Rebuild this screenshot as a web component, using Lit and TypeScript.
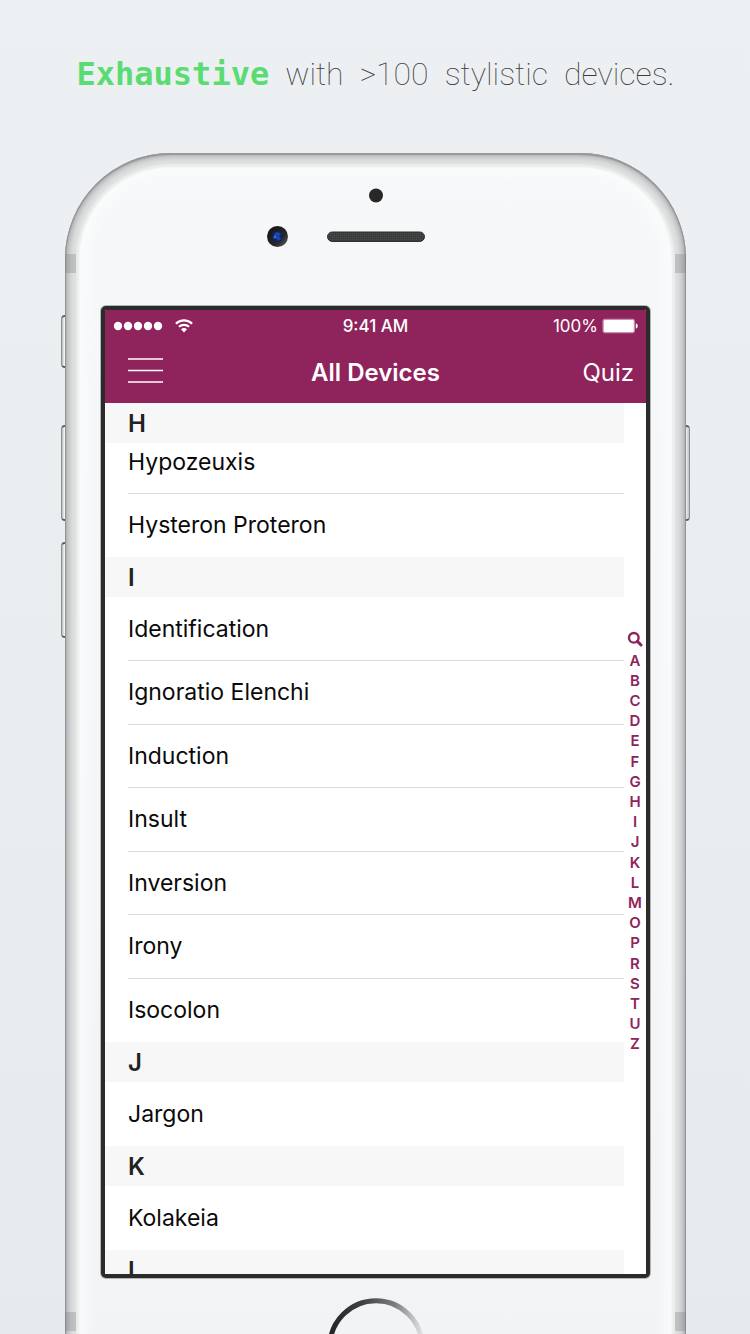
import { LitElement, html, css, svg } from "lit";
import { customElement, property } from "lit/decorators.js";

interface Section {
  letter: string;
  devices: string[];
}

const SECTIONS: Section[] = [
  { letter: "H", devices: ["Hypozeuxis", "Hysteron Proteron"] },
  {
    letter: "I",
    devices: [
      "Identification",
      "Ignoratio Elenchi",
      "Induction",
      "Insult",
      "Inversion",
      "Irony",
      "Isocolon",
    ],
  },
  { letter: "J", devices: ["Jargon"] },
  { letter: "K", devices: ["Kolakeia"] },
  { letter: "L", devices: [] },
];

const INDEX = [..."ABCDEFGHIJKLMOPRSTUZ"];

@customElement("status-bar")
export class StatusBar extends LitElement {
  static styles = css`
    :host {
      display: grid;
      grid-template-columns: 1fr auto 1fr;
      align-items: center;
      height: 32px;
      padding: 0 8px;
      color: #fff;
      font-size: 17px;
      line-height: 20px;
    }
    .signal {
      display: flex;
      align-items: center;
      gap: 12px;
    }
    .time {
      font-weight: 500;
    }
    .power {
      display: flex;
      align-items: center;
      justify-content: flex-end;
      gap: 4px;
    }
    svg {
      display: block;
    }
  `;

  render() {
    return html`
      <div class="signal">
        <svg width="50" height="10" viewBox="0 0 50 10" fill="#fff" aria-hidden="true">
          ${[5, 15, 25, 35, 45].map((x) => svg`<circle cx=${x} cy="5" r="4.2" />`)}
        </svg>
        <svg width="18" height="14" viewBox="0 0 18 14" fill="none" stroke="#fff" stroke-width="2.2" aria-hidden="true">
          <path d="M0.9 4.7C5.4 .3 12.6 .3 17.1 4.7" />
          <path d="M3.9 7.8C6.8 5.1 11.2 5.1 14.1 7.8" />
          <path d="M6 10.3C7.8 8.7 10.2 8.7 12 10.3L9 13.4Z" fill="#fff" stroke="none" />
        </svg>
      </div>
      <span class="time">9:41 AM</span>
      <div class="power">
        <span>100%</span>
        <svg width="36" height="16" viewBox="0 0 36 16" aria-hidden="true">
          <rect x="0.5" y="0.8" width="32.5" height="14.4" rx="2.4" fill="#c78fac" />
          <rect x="1.8" y="2" width="30" height="12" rx="1.2" fill="#fff" />
          <path d="M33.8 5.2q2 .6 2 2.8t-2 2.8z" fill="#fff" />
        </svg>
      </div>
    `;
  }
}

@customElement("nav-bar")
export class NavBar extends LitElement {
  @property() heading = "";

  static styles = css`
    :host {
      display: grid;
      grid-template-columns: 1fr auto 1fr;
      align-items: center;
      height: 61px;
      padding: 0 12px;
      color: #fff;
    }
    button {
      padding: 0;
      border: 0;
      background: none;
      color: inherit;
      font: inherit;
      font-size: 24px;
      line-height: 30px;
      cursor: pointer;
    }
    .menu {
      justify-self: start;
      padding-left: 11px;
    }
    .quiz {
      justify-self: end;
    }
    h2 {
      margin: 0;
      font-size: 24px;
      line-height: 30px;
      font-weight: 600;
    }
    svg {
      display: block;
    }
  `;

  render() {
    return html`
      <button class="menu" aria-label="Menu">
        <svg width="35" height="30" viewBox="0 0 35 30" stroke="#fff" stroke-width="1.5">
          <path d="M0 1H35M0 12.5H35M0 24H35" />
        </svg>
      </button>
      <h2>${this.heading}</h2>
      <button class="quiz">Quiz</button>
    `;
  }
}

@customElement("device-list")
export class DeviceList extends LitElement {
  @property({ attribute: false }) sections: Section[] = [];

  static styles = css`
    :host {
      display: block;
      overflow: hidden;
    }
    h3 {
      position: relative;
      height: 40px;
      margin: 0;
      padding-left: 23px;
      background: #f7f7f7;
      color: #222;
      font-size: 24px;
      line-height: 42px;
      font-weight: 600;
    }
    ul {
      margin: 0;
      padding: 0 0 0 23px;
      list-style: none;
    }
    .scrolled {
      margin-top: -13px;
    }
    li {
      height: 63px;
      line-height: 64px;
    }
    li:nth-child(even),
    li:last-child {
      height: 64px;
    }
    li:not(:last-child) {
      box-shadow: 0 1px #dcdcdc;
    }
    a {
      display: block;
      color: #0a0a0a;
      font-size: 23px;
      text-decoration: none;
    }
  `;

  render() {
    return this.sections.map(
      (s, i) => html`
        <section>
          <h3 id=${s.letter}>${s.letter}</h3>
          <ul class=${i === 0 ? "scrolled" : ""}>
            ${s.devices.map((d) => html`<li><a href="#">${d}</a></li>`)}
          </ul>
        </section>
      `
    );
  }
}

@customElement("index-rail")
export class IndexRail extends LitElement {
  static styles = css`
    :host {
      display: flex;
      flex-direction: column;
      align-items: center;
      justify-content: center;
      padding-top: 4px;
      background: #fff;
    }
    .search {
      display: grid;
      place-items: center;
      width: 22px;
      height: 24px;
      padding: 0;
      border: 0;
      background: none;
    }
    nav {
      display: grid;
      grid-auto-rows: 1fr;
      height: 404px;
      text-align: center;
    }
    a {
      color: #8f245c;
      font-size: 15px;
      line-height: 20px;
      font-weight: 600;
      text-decoration: none;
    }
  `;

  render() {
    return html`
      <button class="search" aria-label="Search">
        <svg width="16" height="16" viewBox="0 0 16 16" fill="none" stroke="#8f245c">
          <circle cx="6.8" cy="6.8" r="4.8" stroke-width="2.4" />
          <path d="M10.4 10.4L14 14" stroke-width="3" stroke-linecap="round" />
        </svg>
      </button>
      <nav aria-label="Index">
        ${INDEX.map((l) => html`<a href="#${l}">${l}</a>`)}
      </nav>
    `;
  }
}

@customElement("phone-frame")
export class PhoneFrame extends LitElement {
  static styles = css`
    :host {
      position: relative;
      display: flex;
      flex-direction: column;
      min-height: 0;
    }
    .body {
      position: relative;
      flex: 1;
      min-height: 0;
      display: flex;
      flex-direction: column;
      box-sizing: border-box;
      margin-bottom: -60px;
      padding: 0 36px;
      border-radius: 106px 106px 0 0;
      background: linear-gradient(#f7f8fa, #f2f3f5);
      box-shadow:
        inset 0 2px 1px #97989a,
        inset 1px 0 1px #8e8f91,
        inset -1px 0 1px #8e8f91,
        inset 0 0 7px 3px #a4a5a7,
        inset 0 0 1px 11px #e0e2e2,
        inset 0 0 2px 14px #eaeceb,
        inset 0 0 14px 20px #fbfcfc;
    }
    .top {
      flex: none;
      height: 153px;
    }
    .top svg,
    .chin svg {
      display: block;
      margin: 0 auto;
    }
    .screen {
      flex: 1;
      min-height: 0;
      display: flex;
      flex-direction: column;
      border: 4px solid #2b2b2b;
      border-radius: 5px;
      box-shadow: 0 0 0 1px #b4b5b7;
      overflow: hidden;
      background: #fff;
    }
    .chin {
      flex: none;
      height: 116px;
      padding-top: 20px;
      box-sizing: border-box;
      overflow: hidden;
    }
    .key {
      position: absolute;
      left: -4px;
      box-sizing: border-box;
      width: 8px;
      height: 96px;
      border: 1px solid #8d8f90;
      border-top: 2px solid #5b5d5e;
      border-bottom: 2px solid #5b5d5e;
      border-radius: 4px 0 0 4px;
      background: linear-gradient(90deg, #b7babb, #f4f6f6 40%, #c2c4c5);
    }
    .mute {
      top: 162px;
      height: 53px;
    }
    .up {
      top: 272px;
    }
    .down {
      top: 389px;
    }
    .power {
      top: 272px;
      left: auto;
      right: -4px;
      border-radius: 0 4px 4px 0;
    }
    .band {
      position: absolute;
      top: 101px;
      width: 11px;
      height: 19px;
      background: rgba(120, 122, 124, 0.3);
    }
    .low {
      top: auto;
      bottom: 63px;
    }
    .left {
      left: 0;
    }
    .right {
      right: 0;
    }
  `;

  render() {
    return html`
      <div class="key mute"></div>
      <div class="key up"></div>
      <div class="key down"></div>
      <div class="key power"></div>
      <div class="body">
        <div class="band left"></div>
        <div class="band right"></div>
        <div class="band left low"></div>
        <div class="band right low"></div>
        <div class="top">
          <svg width="220" height="100" viewBox="0 0 220 100" aria-hidden="true">
            <defs>
              <linearGradient id="lens" x1="0" y1="0" x2="1" y2="1">
                <stop offset="0" stop-color="#111" />
                <stop offset=".65" stop-color="#292929" />
                <stop offset="1" stop-color="#666" />
              </linearGradient>
              <pattern id="mesh" width="2" height="2" patternUnits="userSpaceOnUse">
                <rect width="2" height="2" fill="#3b3d3d" />
                <rect width="1" height="1" fill="#4c4e4e" />
              </pattern>
            </defs>
            <circle cx="110" cy="42.5" r="7" fill="#282828" />
            <circle cx="11.5" cy="83.5" r="10.5" fill="url(#lens)" />
            <circle cx="11.5" cy="83.5" r="5.6" fill="#10245c" />
            <path d="M9 80l3-1 3 2-2 2 2 3-3 2-2-3-3 1z" fill="#1c46a8" />
            <circle cx="9" cy="84" r="1.2" fill="#3f74dc" />
            <rect x="61.5" y="79" width="97" height="9.5" rx="4.7" fill="url(#mesh)" stroke="#2d2f2f" />
          </svg>
        </div>
        <div class="screen"><slot></slot></div>
        <div class="chin">
          <svg width="98" height="98" viewBox="0 0 98 98" fill="none" aria-hidden="true">
            <defs>
              <linearGradient id="ring" x1="0" y1="0" x2="1" y2="0">
                <stop offset="0" stop-color="#242628" />
                <stop offset=".35" stop-color="#3d3f40" />
                <stop offset=".7" stop-color="#7b7d7e" />
                <stop offset="1" stop-color="#e2e3e4" />
              </linearGradient>
            </defs>
            <circle cx="49" cy="49" r="46.2" stroke="url(#ring)" stroke-width="5" />
          </svg>
        </div>
      </div>
    `;
  }
}

@customElement("app-root")
export class AppRoot extends LitElement {
  static styles = css`
    :host {
      display: flex;
      flex-direction: column;
      box-sizing: border-box;
      height: 100vh;
      padding: 0 64px 0 65px;
      overflow: hidden;
      background: linear-gradient(#edf0f2, #e9eef1 40%, #e4eaed);
      font-family: Inter, Roboto, "Liberation Sans", sans-serif;
    }
    h1 {
      display: flex;
      flex: none;
      align-items: baseline;
      justify-content: center;
      gap: 16px;
      height: 153px;
      box-sizing: border-box;
      margin: 0;
      padding-top: 52px;
      color: #3c3c3c;
      font-family: Roboto, sans-serif;
      font-size: 32px;
      line-height: 44px;
      font-weight: 250;
      white-space: nowrap;
    }
    strong {
      color: #5bdc72;
      font-family: "DejaVu Sans Mono", monospace;
      font-weight: 700;
    }
    phone-frame {
      flex: 1;
    }
    header {
      flex: none;
      background: #8f245c;
    }
    .content {
      flex: 1;
      min-height: 0;
      display: grid;
      grid-template-columns: 1fr 22px;
      grid-template-rows: minmax(0, 1fr);
    }
  `;

  render() {
    return html`
      <h1>
        <strong>Exhaustive</strong>
        <span>with</span>
        <span>&gt;100</span>
        <span>stylistic</span>
        <span>devices.</span>
      </h1>
      <phone-frame>
        <header>
          <status-bar></status-bar>
          <nav-bar heading="All Devices"></nav-bar>
        </header>
        <div class="content">
          <device-list .sections=${SECTIONS}></device-list>
          <index-rail></index-rail>
        </div>
      </phone-frame>
    `;
  }
}
